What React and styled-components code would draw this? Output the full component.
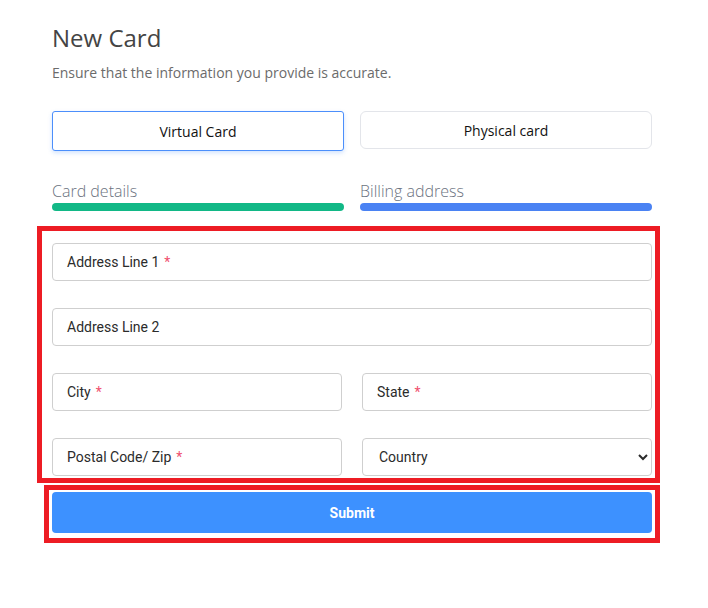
import styled, { createGlobalStyle } from 'styled-components';

const GlobalStyle = createGlobalStyle`
  body {
    margin: 0;
    background: #ffffff;
    font-family: 'Open Sans', Arial, sans-serif;
  }
`;

const Page = styled.div`
  width: 600px;
  padding: 22px 0 0 52px;
`;

const Title = styled.h1`
  margin: 0;
  font-size: 24px;
  line-height: 32px;
  font-weight: 400;
  color: #444444;
`;

const Subtitle = styled.p`
  margin: 9px 0 0;
  font-size: 14px;
  line-height: 20px;
  color: #6b6b6b;
`;

const TypeRow = styled.div`
  display: grid;
  grid-template-columns: 1fr 1fr;
  gap: 16px;
  margin-top: 28px;
`;

const TypeButton = styled.button`
  height: ${(props) => (props.$active ? 40 : 38)}px;
  border: 1px solid ${(props) => (props.$active ? '#4c8ffb' : '#e3e5ea')};
  border-radius: ${(props) => (props.$active ? 3 : 6)}px;
  background: #ffffff;
  box-shadow: ${(props) =>
    props.$active ? '0 2px 4px rgba(76, 143, 251, 0.25)' : 'none'};
  font-family: 'Open Sans', Arial, sans-serif;
  font-size: 14px;
  color: #111111;
  cursor: pointer;
`;

const Steps = styled.div`
  display: grid;
  grid-template-columns: 1fr 1fr;
  gap: 16px;
  margin-top: 29px;
`;

const Step = styled.div`
  display: flex;
  flex-direction: column;
  gap: 1px;
`;

const StepLabel = styled.span`
  font-size: 16px;
  line-height: 22px;
  font-weight: 300;
  color: #6b7280;
`;

const StepBar = styled.div`
  height: 8px;
  border-radius: 4px;
  background: ${(props) => props.$color};
`;

const Highlight = styled.div`
  border: 5px solid #ed1c24;
  margin: ${(props) => props.$margin};
  padding: ${(props) => props.$padding};
`;

const Fields = styled.div`
  display: grid;
  grid-template-columns: 1fr 1fr;
  column-gap: 20px;
  row-gap: 27px;
`;

const Field = styled.label`
  grid-column: ${(props) => (props.$wide ? '1 / -1' : 'auto')};
  display: flex;
  align-items: center;
  height: 38px;
  box-sizing: border-box;
  padding: 0 14px;
  border: 1px solid #cfcfcf;
  border-radius: 4px;
  font-family: Roboto, Arial, sans-serif;
  font-size: 14px;
  color: #2b2b2b;
`;

const Required = styled.span`
  margin-left: 5px;
  color: #f0506e;
`;

const Select = styled.select`
  height: 38px;
  box-sizing: border-box;
  padding: 0 6px 0 12px;
  border: 1px solid #cfcfcf;
  border-radius: 4px;
  background: #ffffff;
  font-family: Roboto, Arial, sans-serif;
  font-size: 14px;
  color: #2b2b2b;
`;

const SubmitButton = styled.button`
  display: block;
  width: 100%;
  height: 41px;
  border: none;
  border-radius: 4px;
  background: #3d91ff;
  color: #ffffff;
  font-family: Roboto, Arial, sans-serif;
  font-size: 14px;
  font-weight: 700;
  cursor: pointer;
`;

function App() {
  return (
    <>
      <GlobalStyle />
      <Page>
        <Title>New Card</Title>
        <Subtitle>Ensure that the information you provide is accurate.</Subtitle>

        <TypeRow>
          <TypeButton $active>Virtual Card</TypeButton>
          <TypeButton>Physical card</TypeButton>
        </TypeRow>

        <Steps>
          <Step>
            <StepLabel>Card details</StepLabel>
            <StepBar $color="#12b886" />
          </Step>
          <Step>
            <StepLabel>Billing address</StepLabel>
            <StepBar $color="#4a82f3" />
          </Step>
        </Steps>

        <Highlight $margin="15px -8px 0 -15px" $padding="12px 3px 2px 10px">
          <Fields>
            <Field $wide>
              Address Line 1<Required>*</Required>
            </Field>
            <Field $wide>Address Line 2</Field>
            <Field>
              City<Required>*</Required>
            </Field>
            <Field>
              State<Required>*</Required>
            </Field>
            <Field>
              Postal Code/ Zip<Required>*</Required>
            </Field>
            <Select defaultValue="">
              <option value="">Country</option>
            </Select>
          </Fields>
        </Highlight>

        <Highlight $margin="2px -8px 0 -8px" $padding="2px 3px 5px 3px">
          <SubmitButton>Submit</SubmitButton>
        </Highlight>
      </Page>
    </>
  );
}

export default App;
